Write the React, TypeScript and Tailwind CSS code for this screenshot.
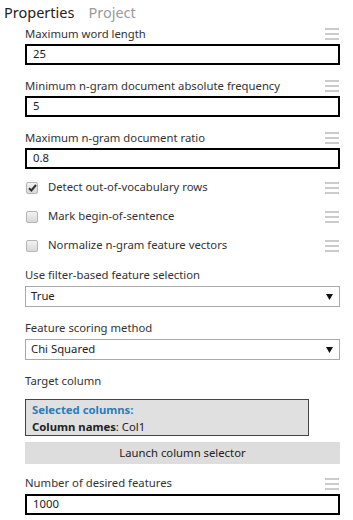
import React from "react";

const font = { fontFamily: '"Noto Sans", "Open Sans", sans-serif' };

function Hamburger() {
  return (
    <div className="flex flex-col gap-[3px] w-[14px] shrink-0">
      <div className="h-[2px] bg-[#cbcbcb]" />
      <div className="h-[2px] bg-[#cbcbcb]" />
      <div className="h-[2px] bg-[#cbcbcb]" />
    </div>
  );
}

function LabelRow({ text, menu = true, h = "h-[20px]" }: { text: string; menu?: boolean; h?: string }) {
  return (
    <div className={`flex items-center justify-between ${h} pr-[14px]`}>
      <span className="text-[11.3px] text-[#333]">{text}</span>
      {menu && <Hamburger />}
    </div>
  );
}

function TextBox({ value }: { value: string }) {
  return (
    <div className="h-[21px] mr-[13px] border-2 border-black flex items-center pl-[6px] text-[11.3px] text-[#222]">
      {value}
    </div>
  );
}

function Select({ value }: { value: string }) {
  return (
    <div className="h-[21px] mr-[13px] border border-[#a9a9a9] flex items-center justify-between pl-[5px] pr-[6px] text-[11.3px] text-[#222]">
      <span>{value}</span>
      <svg width="7" height="6" viewBox="0 0 7 6">
        <path d="M0 0 H7 L3.5 6 Z" fill="#111" />
      </svg>
    </div>
  );
}

function Check({ label, checked }: { label: string; checked?: boolean }) {
  return (
    <div className="flex items-center justify-between h-[29px] pr-[14px]">
      <div className="flex items-center">
        <div className="w-[12px] h-[12px] ml-[1px] rounded-[2px] border border-[#b5b5b5] bg-gradient-to-b from-[#f2f2f2] to-[#d8d8d8] flex items-center justify-center">
          {checked && (
            <svg width="9" height="8" viewBox="0 0 9 8">
              <path d="M1 4.2 L3.4 6.5 L8 1" stroke="#333" strokeWidth="2" fill="none" />
            </svg>
          )}
        </div>
        <span className="ml-[10px] text-[11.3px] text-[#333]">{label}</span>
      </div>
      <Hamburger />
    </div>
  );
}

export default function App() {
  return (
    <div className="w-[353px] h-[520px] bg-white overflow-hidden" style={font}>
      <div className="flex items-end h-[22px] pl-[4px] gap-[14px] text-[14.5px] leading-[20px]">
        <span className="text-[#222]">Properties</span>
        <span className="text-[#9a9a9a]">Project</span>
      </div>
      <div className="pl-[25px]">
        <div className="h-[2px]" />
        <LabelRow text="Maximum word length" />
        <TextBox value="25" />
        <div className="h-[11px]" />
        <LabelRow text="Minimum n-gram document absolute frequency" />
        <TextBox value="5" />
        <div className="h-[11px]" />
        <LabelRow text="Maximum n-gram document ratio" />
        <TextBox value="0.8" />
        <div className="h-[4px]" />
        <Check label="Detect out-of-vocabulary rows" checked />
        <Check label="Mark begin-of-sentence" />
        <Check label="Normalize n-gram feature vectors" />
        <div className="h-[4px]" />
        <LabelRow text="Use filter-based feature selection" menu={false} h="h-[22px]" />
        <Select value="True" />
        <div className="h-[10px]" />
        <LabelRow text="Feature scoring method" menu={false} h="h-[22px]" />
        <Select value="Chi Squared" />
        <div className="h-[10px]" />
        <LabelRow text="Target column" menu={false} h="h-[22px]" />
        <div className="h-[7px]" />
        <div className="w-[284px] h-[37px] border border-[#444] bg-[#e0e0e0] px-[6px] flex flex-col justify-center text-[11.3px] leading-[17px]">
          <span className="font-bold text-[#2a7db8]">Selected columns:</span>
          <span className="text-[#222]">
            <span className="font-bold">Column names</span>: Col1
          </span>
        </div>
        <div className="h-[6px]" />
        <div className="h-[22px] mr-[13px] bg-[#dddddd] flex items-center justify-center text-[11.3px] text-[#222]">
          Launch column selector
        </div>
        <div className="h-[9px]" />
        <LabelRow text="Number of desired features" h="h-[21px]" />
        <TextBox value="1000" />
      </div>
    </div>
  );
}
